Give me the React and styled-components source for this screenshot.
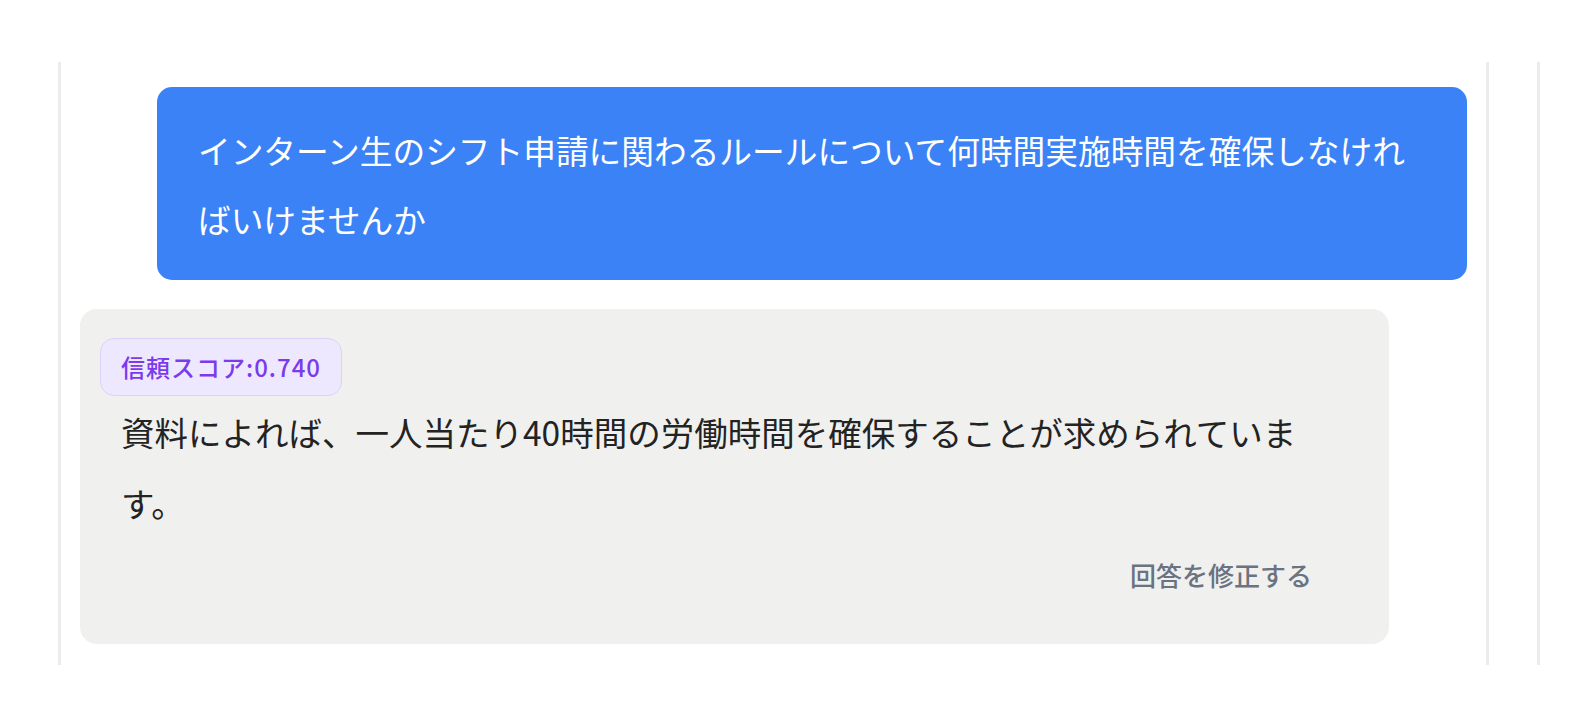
import React from "react";
import styled, { createGlobalStyle } from "styled-components";

const GlobalStyle = createGlobalStyle`
  html, body {
    margin: 0;
    padding: 0;
    background: #ffffff;
  }
  body {
    font-family: "Noto Sans", "Noto Sans CJK JP", sans-serif;
  }
  * {
    box-sizing: border-box;
  }
`;

const Page = styled.div`
  display: flex;
  height: 726px;
  padding: 62px 0 61px 58px;
  gap: 48px;
`;

const ChatColumn = styled.main`
  width: 1431px;
  border-left: 3px solid #ececec;
  border-right: 3px solid #ececec;
  padding: 25px 19px;
  display: flex;
  flex-direction: column;
  gap: 29px;
`;

const SidePanel = styled.aside`
  flex: 1;
  border-left: 3px solid #ececec;
`;

const Bubble = styled.div`
  width: ${({ $width }) => $width}px;
  align-self: ${({ $mine }) => ($mine ? "flex-end" : "flex-start")};
  background: ${({ $mine }) => ($mine ? "#3b82f6" : "#f0f0ef")};
  color: ${({ $mine }) => ($mine ? "#ffffff" : "#232323")};
  border-radius: ${({ $mine }) => ($mine ? "15px" : "17px")};
  padding: ${({ $mine }) => ($mine ? "28px 41px 27px" : "29px 20px 43px")};
`;

const Text = styled.p`
  margin: 0;
  font-family: "Noto Sans CJK JP", sans-serif;
  font-size: ${({ $size }) => $size}px;
  line-height: ${({ $lh }) => $lh}px;
  max-width: ${({ $max }) => ($max ? `${$max}px` : "none")};
`;

const Badge = styled.span`
  display: inline-block;
  padding: 11px 20px;
  font-family: "Noto Sans CJK JP", sans-serif;
  font-size: 24px;
  font-weight: 500;
  letter-spacing: 1px;
  line-height: 34px;
  color: #7c3aed;
  background: #ede8fd;
  border: 1.5px solid #ddd2fb;
  border-radius: 14px;
`;

const Body = styled.div`
  padding: 0 21px;
`;

const Actions = styled.div`
  display: flex;
  justify-content: flex-end;
  margin-top: 11px;
`;

const EditButton = styled.button`
  border: none;
  background: none;
  padding: 6px 36px 6px 16px;
  font-family: "Noto Sans CJK JP", sans-serif;
  font-size: 26px;
  line-height: 40px;
  font-weight: 500;
  color: #6b7280;
  cursor: pointer;

  &:hover {
    color: #4b5563;
  }
`;

export default function App() {
  return (
    <>
      <GlobalStyle />
      <Page>
        <ChatColumn>
          <Bubble $mine $width={1310}>
            <Text $size={32.7} $lh={69}>
              インターン生のシフト申請に関わるルールについて何時間実施時間を確保しなければいけませんか
            </Text>
          </Bubble>
          <Bubble $width={1309}>
            <Badge>信頼スコア:0.740</Badge>
            <Body>
              <Text $size={33.5} $lh={71} $max={1190}>
                資料によれば、一人当たり40時間の労働時間を確保することが求められています。
              </Text>
              <Actions>
                <EditButton>回答を修正する</EditButton>
              </Actions>
            </Body>
          </Bubble>
        </ChatColumn>
        <SidePanel />
      </Page>
    </>
  );
}
